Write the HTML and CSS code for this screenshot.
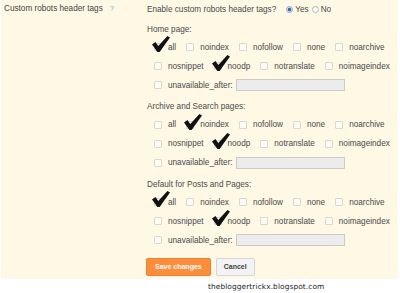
FILE: index.html
```html
<!DOCTYPE html>
<html lang="en">
<head>
    <meta charset="UTF-8">
    <meta name="viewport" content="width=device-width, initial-scale=1.0">
    <title>Custom robots header tags</title>
    <link rel="stylesheet" href="styles.css">
</head>
<body>
    <div class="panel">
        <div class="setting">
            <div class="setting-label">Custom robots header tags <span class="help">?</span></div>

            <div class="setting-body">
                <div class="enable">
                    Enable custom robots header tags?
                    <span class="radios">
                        <span class="radio on"></span>Yes
                        <span class="radio"></span>No
                    </span>
                </div>

                <!-- Home page -->
                <div class="group">
                    <div class="group-title">Home page:</div>
                    <div class="opt-row">
                        <span class="opt"><span class="box checked"><svg class="tick" viewBox="0 0 18 16"><path d="M0 8.4 L3.4 6 L6.3 9.9 L15.4 0 L18 1.6 L7.6 16 L5.4 16 Z"/></svg></span>all</span>
                        <span class="opt"><span class="box"></span>noindex</span>
                        <span class="opt"><span class="box"></span>nofollow</span>
                        <span class="opt"><span class="box"></span>none</span>
                        <span class="opt"><span class="box"></span>noarchive</span>
                    </div>
                    <div class="opt-row">
                        <span class="opt"><span class="box"></span>nosnippet</span>
                        <span class="opt"><span class="box checked"><svg class="tick" viewBox="0 0 18 16"><path d="M0 8.4 L3.4 6 L6.3 9.9 L15.4 0 L18 1.6 L7.6 16 L5.4 16 Z"/></svg></span>noodp</span>
                        <span class="opt"><span class="box"></span>notranslate</span>
                        <span class="opt"><span class="box"></span>noimageindex</span>
                    </div>
                    <div class="opt-row">
                        <span class="opt"><span class="box"></span>unavailable_after:</span>
                        <span class="date-input"></span>
                    </div>
                </div>

                <!-- Archive and Search pages -->
                <div class="group">
                    <div class="group-title">Archive and Search pages:</div>
                    <div class="opt-row">
                        <span class="opt"><span class="box"></span>all</span>
                        <span class="opt"><span class="box checked"><svg class="tick" viewBox="0 0 18 16"><path d="M0 8.4 L3.4 6 L6.3 9.9 L15.4 0 L18 1.6 L7.6 16 L5.4 16 Z"/></svg></span>noindex</span>
                        <span class="opt"><span class="box"></span>nofollow</span>
                        <span class="opt"><span class="box"></span>none</span>
                        <span class="opt"><span class="box"></span>noarchive</span>
                    </div>
                    <div class="opt-row">
                        <span class="opt"><span class="box"></span>nosnippet</span>
                        <span class="opt"><span class="box checked"><svg class="tick" viewBox="0 0 18 16"><path d="M0 8.4 L3.4 6 L6.3 9.9 L15.4 0 L18 1.6 L7.6 16 L5.4 16 Z"/></svg></span>noodp</span>
                        <span class="opt"><span class="box"></span>notranslate</span>
                        <span class="opt"><span class="box"></span>noimageindex</span>
                    </div>
                    <div class="opt-row">
                        <span class="opt"><span class="box"></span>unavailable_after:</span>
                        <span class="date-input"></span>
                    </div>
                </div>

                <!-- Default for Posts and Pages -->
                <div class="group">
                    <div class="group-title">Default for Posts and Pages:</div>
                    <div class="opt-row">
                        <span class="opt"><span class="box checked"><svg class="tick" viewBox="0 0 18 16"><path d="M0 8.4 L3.4 6 L6.3 9.9 L15.4 0 L18 1.6 L7.6 16 L5.4 16 Z"/></svg></span>all</span>
                        <span class="opt"><span class="box"></span>noindex</span>
                        <span class="opt"><span class="box"></span>nofollow</span>
                        <span class="opt"><span class="box"></span>none</span>
                        <span class="opt"><span class="box"></span>noarchive</span>
                    </div>
                    <div class="opt-row">
                        <span class="opt"><span class="box"></span>nosnippet</span>
                        <span class="opt"><span class="box checked"><svg class="tick" viewBox="0 0 18 16"><path d="M0 8.4 L3.4 6 L6.3 9.9 L15.4 0 L18 1.6 L7.6 16 L5.4 16 Z"/></svg></span>noodp</span>
                        <span class="opt"><span class="box"></span>notranslate</span>
                        <span class="opt"><span class="box"></span>noimageindex</span>
                    </div>
                    <div class="opt-row">
                        <span class="opt"><span class="box"></span>unavailable_after:</span>
                        <span class="date-input"></span>
                    </div>
                </div>

                <div class="actions">
                    <button class="btn btn-save">Save changes</button>
                    <button class="btn btn-cancel">Cancel</button>
                </div>
            </div>
        </div>
    </div>

    <div class="credit">thebloggertrickx.blogspot.com</div>
</body>
</html>
```

FILE: styles.css
```css
body {
    margin: 0;
    background: #ffffff;
    font-family: "Liberation Sans", Arial, sans-serif;
    font-size: 8.2px;
    color: #4a4a4a;
}

.panel {
    margin: 0 2px 0 1px;
    padding: 1px 0 3px 3px;
    background: #fff8e5;
}

.setting {
    display: grid;
    grid-template-columns: 143px 1fr;
}

.setting-label {
    line-height: 16px;
    color: #444;
}

.help {
    margin-left: 5px;
    font-size: 7px;
    color: #7d9dcc;
}

.enable {
    display: flex;
    align-items: center;
    height: 16px;
}

.radios {
    display: flex;
    align-items: center;
    margin-left: 10px;
}

.radio {
    width: 7px;
    height: 7px;
    box-sizing: border-box;
    border: 1px solid #b5b5b5;
    border-radius: 50%;
    background: #fdfdfd;
    margin-right: 2px;
}

.radio.on {
    background: radial-gradient(circle, #2f6fc9 0 1.6px, #e8eef6 2.2px);
    border-color: #9aa6b5;
}

.radios .radio:nth-of-type(2) {
    margin-left: 3px;
}

.group {
    margin-top: 4.5px;
}

.group:first-of-type {
    margin-top: 3px;
}

.group-title {
    line-height: 16px;
}

.opt-row {
    display: flex;
    align-items: center;
    gap: 10px;
    height: 19px;
    padding-left: 7px;
}

.opt {
    display: flex;
    align-items: center;
    gap: 6px;
}

.box {
    position: relative;
    width: 8px;
    height: 8px;
    box-sizing: border-box;
    border: 1px solid #dcd7cc;
    background: #fdfbf5;
    border-radius: 1px;
}

.tick {
    position: absolute;
    left: -3px;
    top: -8px;
    width: 18px;
    height: 16px;
    fill: #111;
}

.date-input {
    width: 109px;
    height: 12px;
    box-sizing: border-box;
    margin-left: -7px;
    border: 1px solid #cbcbcb;
    background: #ececec;
}

.actions {
    display: flex;
    gap: 5px;
    margin-top: 8px;
    margin-left: -1px;
}

.btn {
    height: 18px;
    padding: 0 7px;
    font-family: "Liberation Sans", Arial, sans-serif;
    font-size: 7px;
    font-weight: bold;
    border-radius: 2px;
}

.btn-save {
    padding: 0 8px;
    background: #fb8d3d;
    border: 1px solid #f08030;
    color: #fff;
}

.btn-cancel {
    background: #f3f3f3;
    border: 1px solid #d6d6d6;
    color: #444;
}

.credit {
    margin-left: 208px;
    line-height: 16px;
    font-family: "DejaVu Sans", sans-serif;
    font-size: 7.4px;
    letter-spacing: 0.1px;
    color: #222;
}
```
